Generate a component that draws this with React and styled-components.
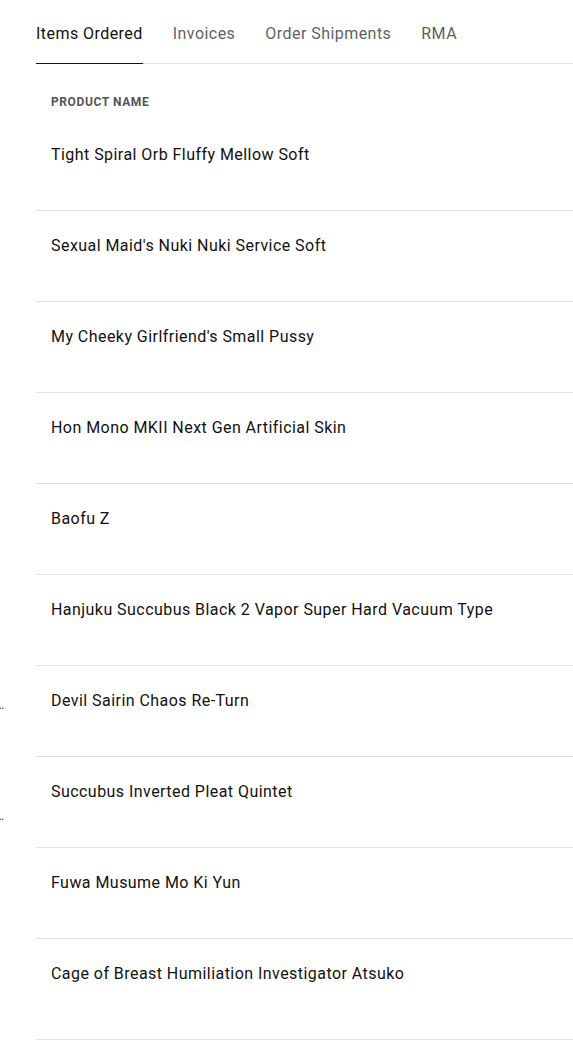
import React from 'react'
import styled, { createGlobalStyle } from 'styled-components'

const GlobalStyle = createGlobalStyle`
  html, body {
    margin: 0;
    padding: 0;
    background: #ffffff;
  }
  body {
    font-family: Roboto, 'Liberation Sans', Arial, sans-serif;
    color: #111111;
    -webkit-font-smoothing: antialiased;
  }
`;

const tabs = ['Items Ordered', 'Invoices', 'Order Shipments', 'RMA']

const products = [
    "Tight Spiral Orb Fluffy Mellow Soft",
    "Sexual Maid's Nuki Nuki Service Soft",
    "My Cheeky Girlfriend's Small Pussy",
    "Hon Mono MKII Next Gen Artificial Skin",
    "Baofu Z",
    "Hanjuku Succubus Black 2 Vapor Super Hard Vacuum Type",
    "Devil Sairin Chaos Re-Turn",
    "Succubus Inverted Pleat Quintet",
    "Fuwa Musume Mo Ki Yun",
    "Cage of Breast Humiliation Investigator Atsuko",
]

export default function App() {
    return (
        <>
            <GlobalStyle />
            <StyledPage>
                <StyledGutter>
                    <StyledClipped top={698}>…</StyledClipped>
                    <StyledClipped top={97}>…</StyledClipped>
                </StyledGutter>
                <StyledMain>
                    <StyledTabBar>
                        {tabs.map((t, i) => (
                            <StyledTab key={t} active={i === 0}>{t}</StyledTab>
                        ))}
                    </StyledTabBar>
                    <StyledTable>
                        <StyledHead>Product Name</StyledHead>
                        {products.map((p, i) => (
                            <StyledRow key={i} last={i === products.length - 1}>{p}</StyledRow>
                        ))}
                    </StyledTable>
                </StyledMain>
            </StyledPage>
        </>
    )
}

const StyledPage = styled.div`
display: flex;
width: 573px;
height: 1043px;
overflow: hidden;
`;

const StyledGutter = styled.div`
width: 36px;
flex-shrink: 0;
display: flex;
flex-direction: column;
overflow: hidden;
`;

const StyledClipped = styled.span`
display: block;
margin-top: ${p => p.top}px;
margin-left: -4px;
font-size: 12px;
line-height: 14px;
color: #333;
`;

const StyledMain = styled.div`
flex: 1;
min-width: 0;
`;

const StyledTabBar = styled.nav`
display: flex;
gap: 30px;
padding-top: 23px;
border-bottom: 1px solid #e0e0e0;
`;

const StyledTab = styled.div`
font-size: 16px;
line-height: 22px;
padding-bottom: 18px;
color: ${p => p.active ? '#111111' : '#5f5f5f'};
letter-spacing: 0.45px;
margin-bottom: -1px;
border-bottom: 1px solid ${p => p.active ? '#111111' : 'transparent'};
white-space: nowrap;
`;

const StyledTable = styled.div`
display: flex;
flex-direction: column;
`;

const StyledHead = styled.div`
padding: 31px 15px 0;
height: 25px;
font-size: 12px;
line-height: 14px;
font-weight: 700;
letter-spacing: 0.6px;
text-transform: uppercase;
color: #555555;
`;

const StyledRow = styled.div`
height: ${p => p.last ? 101 : 91}px;
box-sizing: border-box;
padding: 26px 15px 0;
font-size: 16px;
line-height: 18px;
letter-spacing: 0.45px;
color: #111111;
border-bottom: 1px solid #e0e0e0;
white-space: nowrap;
`;
